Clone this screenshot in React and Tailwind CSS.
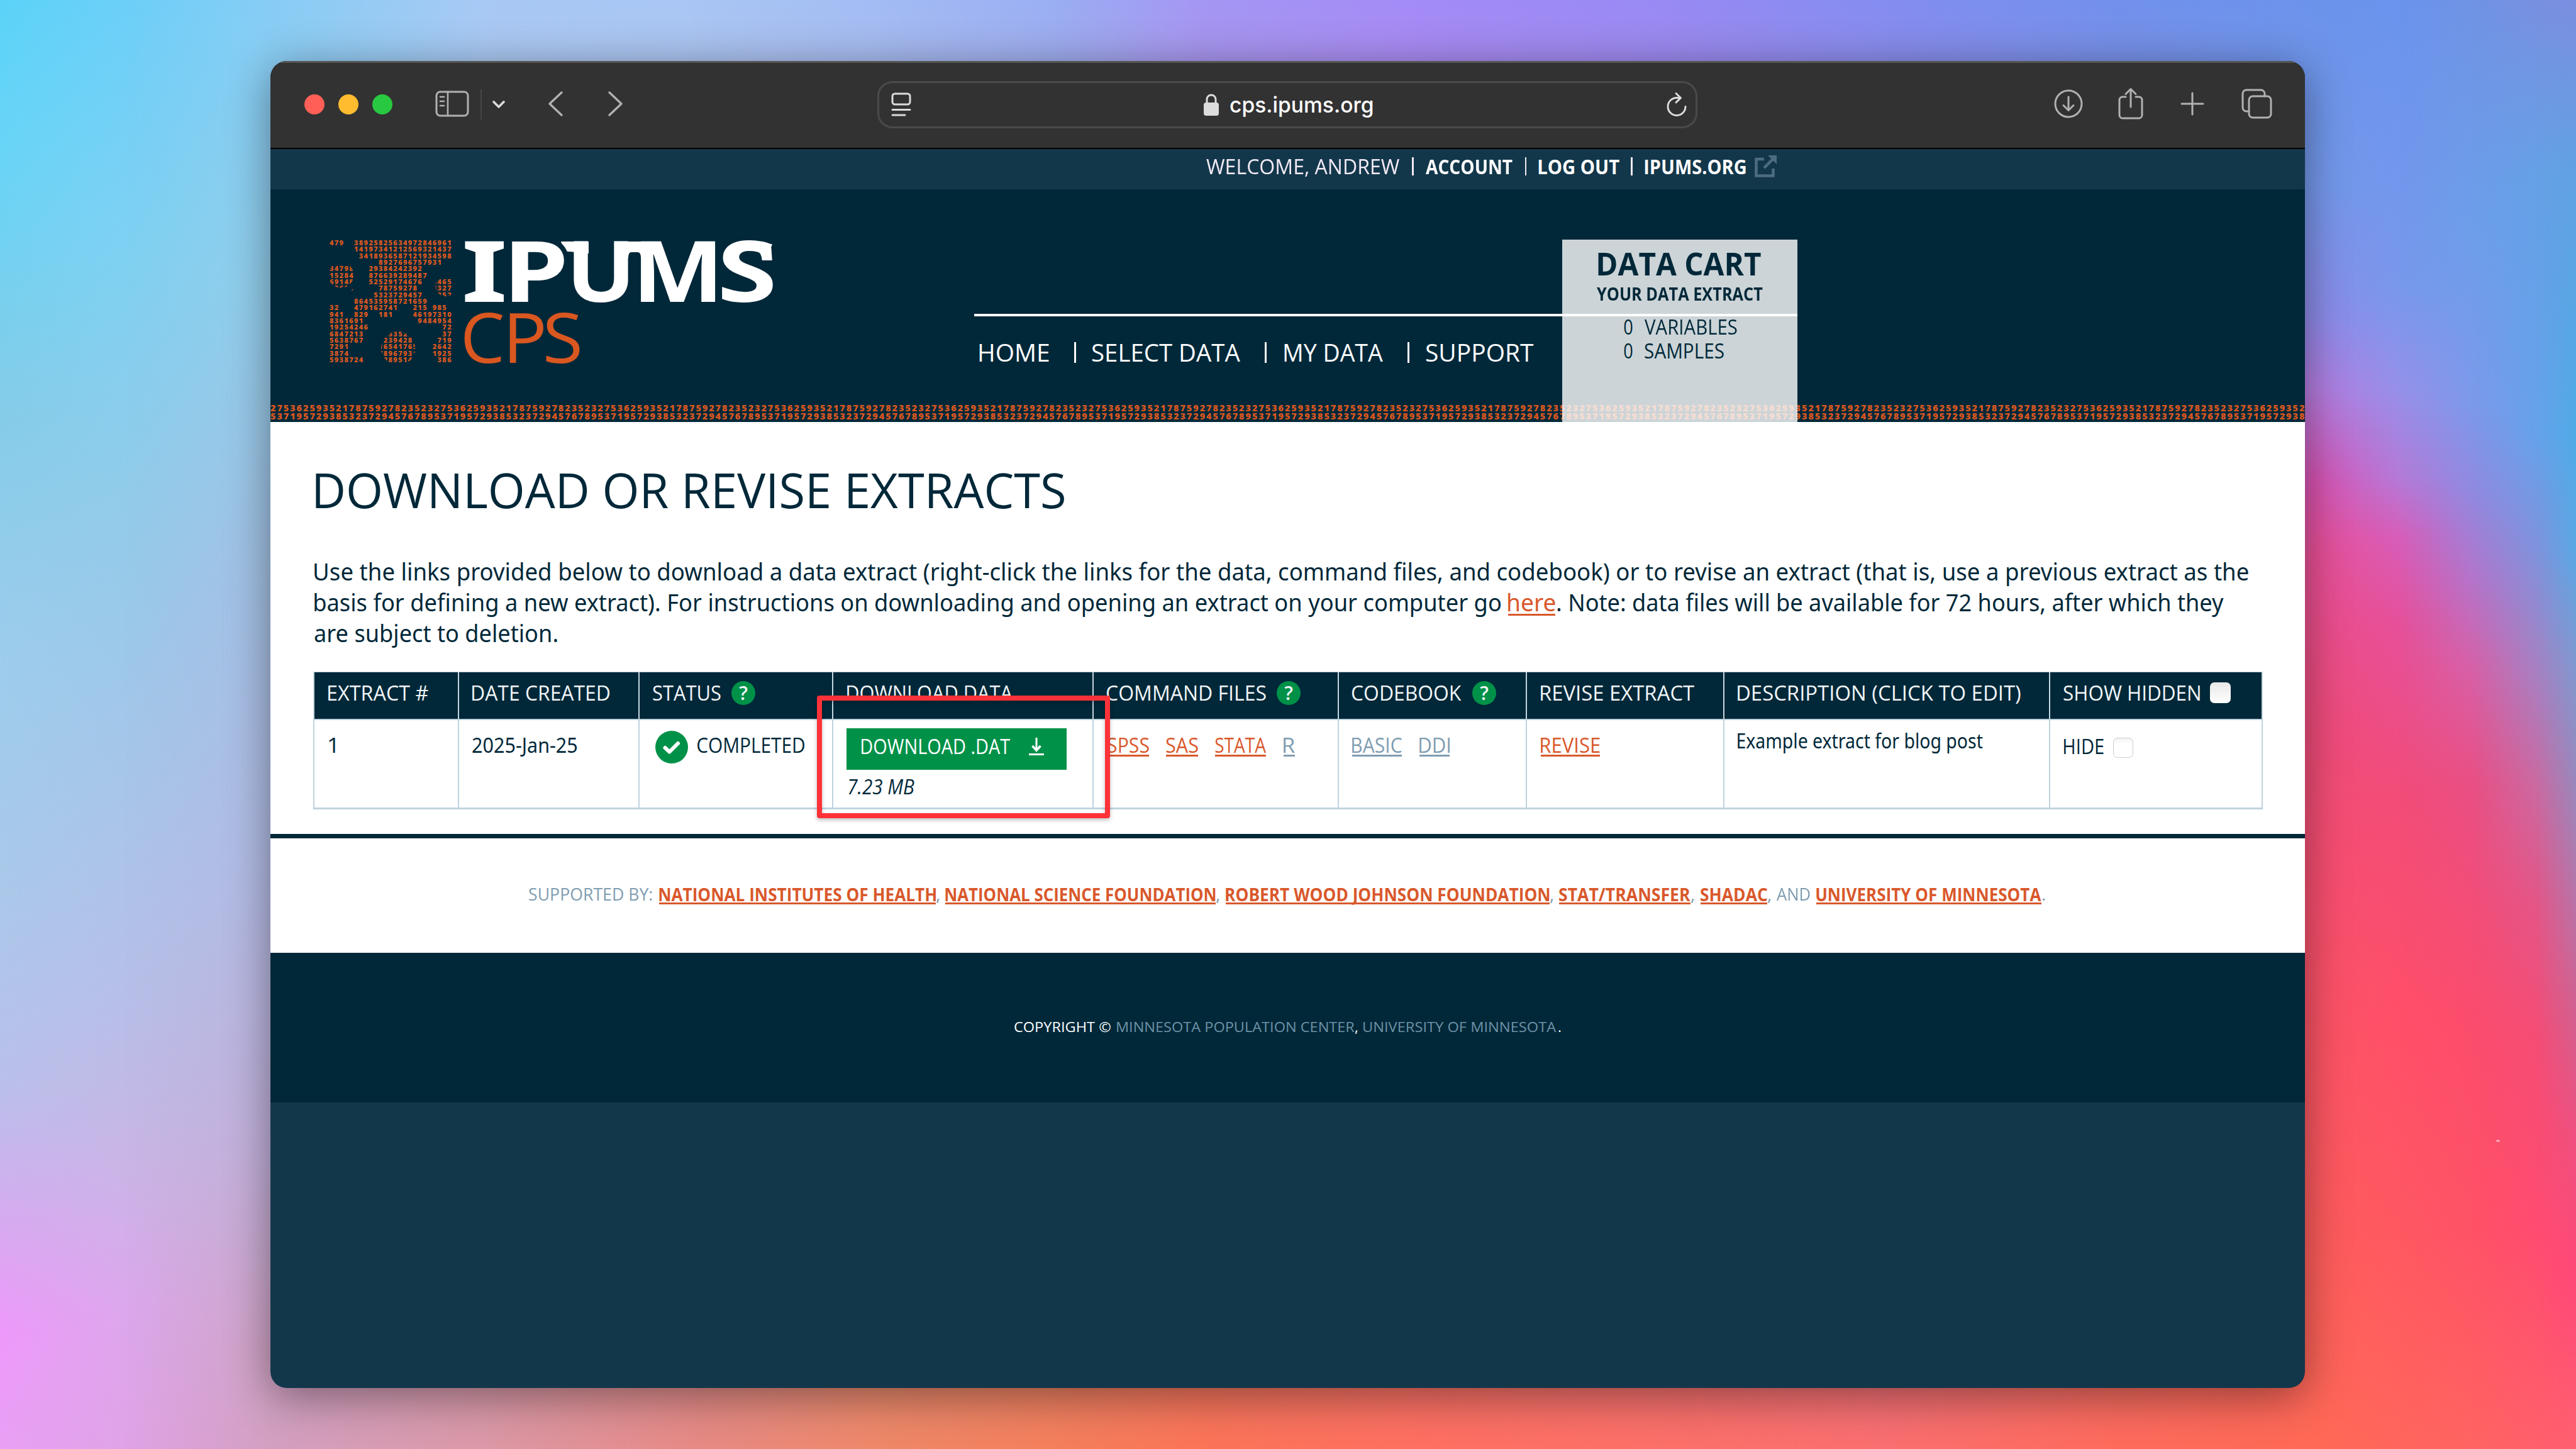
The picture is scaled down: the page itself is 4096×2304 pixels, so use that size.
import { useLayoutEffect, useRef } from "react";

/* Single line of text whose ink is stretched or condensed to the width of its box. */
function Fit({ children, className = "" }) {
  const box = useRef(null);
  const ink = useRef(null);
  useLayoutEffect(() => {
    const cs = getComputedStyle(box.current);
    const ctx = document.createElement("canvas").getContext("2d");
    ctx.font = `${cs.fontStyle} ${cs.fontWeight} ${cs.fontSize} ${cs.fontFamily}`;
    const m = ctx.measureText(children);
    const width = m.actualBoundingBoxLeft + m.actualBoundingBoxRight;
    const scale = box.current.clientWidth / width;
    ink.current.style.transform = `translateX(${m.actualBoundingBoxLeft * scale}px) scaleX(${scale})`;
  }, [children]);
  return (
    <span ref={box} className={`block shrink-0 whitespace-nowrap ${className}`}>
      <span ref={ink} className="inline-block origin-left whitespace-pre">{children}</span>
    </span>
  );
}

/* Wallpaper: vertical gradients cross-faded from one column to the next. */
const columns = [
  { x: 0, s: [[0, "#5cd3f9"], [0.1, "#68d5f7"], [0.28, "#84cde9"], [0.45, "#9dcdec"], [0.6, "#a9c9ea"], [0.75, "#bac0ea"], [0.85, "#d9a9f1"], [0.92, "#ee99fb"], [1, "#e9a0f5"]] },
  { x: 200, s: [[0, "#6ccff8"], [0.15, "#7cd1f3"], [0.35, "#92cbe9"], [0.55, "#a8c5e8"], [0.7, "#b8bee8"], [0.8, "#c9b5e6"], [0.9, "#dca7ec"], [1, "#dfa3e6"]] },
  { x: 420, s: [[0, "#86cdf5"], [0.2, "#92cdea"], [0.4, "#a3c0e4"], [0.6, "#b2bae4"], [0.8, "#c2afd8"], [0.93, "#cfa3c6"], [1, "#d3a0c2"]] },
  { x: 780, s: [[0, "#a8c9f4"], [1, "#dc98a6"]] },
  { x: 1100, s: [[0, "#a9c6f4"], [1, "#e78a86"]] },
  { x: 1400, s: [[0, "#a3bcf4"], [1, "#ef8868"]] },
  { x: 1680, s: [[0, "#9aaef3"], [1, "#f47f5c"]] },
  { x: 1900, s: [[0, "#a497f3"], [1, "#fb7558"]] },
  { x: 2250, s: [[0, "#a48bf7"], [1, "#ff7060"]] },
  { x: 2650, s: [[0, "#988af3"], [1, "#fc7069"]] },
  { x: 3000, s: [[0, "#848df0"], [1, "#fa6f70"]] },
  { x: 3350, s: [[0, "#7291ec"], [1, "#ff6b5c"]] },
  { x: 3680, s: [[0, "#6c93ea"], [0.13, "#7498ea"], [0.22, "#8f8ae9"], [0.27, "#b57bde"], [0.33, "#d854b4"], [0.38, "#e84f96"], [0.5, "#ef4c7a"], [0.62, "#f84f6e"], [0.72, "#fc5464"], [0.85, "#fe5c5c"], [1, "#ff6a56"]] },
  { x: 3816, s: [[0, "#6a94ed"], [0.2, "#7898ec"], [0.27, "#9690e9"], [0.33, "#b47ad8"], [0.37, "#d65eba"], [0.43, "#e6509a"], [0.55, "#f24c78"], [0.7, "#ff4f69"], [0.85, "#ff5862"], [1, "#ff665c"]] },
  { x: 3932, s: [[0, "#7093e4"], [0.15, "#6c9eea"], [0.28, "#7c99ea"], [0.34, "#9189e0"], [0.4, "#b474ca"], [0.46, "#d661a8"], [0.54, "#e94f84"], [0.7, "#fb4c6d"], [0.85, "#ff5266"], [1, "#ff6462"]] },
  { x: 4033, s: [[0, "#7890e0"], [0.12, "#66a0e6"], [0.3, "#66a2ea"], [0.38, "#8092dc"], [0.46, "#a681c3"], [0.54, "#ca6aa2"], [0.62, "#e35688"], [0.72, "#f64c74"], [0.85, "#ff4c70"], [1, "#ff606a"]] },
  { x: 4096, s: [[0, "#7c8ee0"], [0.12, "#60a2e2"], [0.3, "#50aae6"], [0.38, "#5aa8e4"], [0.46, "#8098d0"], [0.54, "#9888bc"], [0.62, "#b874a8"], [0.7, "#d2608f"], [0.78, "#ee5080"], [0.88, "#ff4878"], [1, "#ff6070"]] },
];

function Wallpaper() {
  return (
    <svg className="absolute inset-0 h-full w-full" viewBox="0 0 4096 2304" aria-hidden="true">
      <defs>
        {columns.map((c, i) => (
          <linearGradient key={c.x} id={`v${i}`} gradientUnits="userSpaceOnUse" x1="0" y1="0" x2="0" y2="2304">
            {c.s.map(([o, k]) => <stop key={o} offset={o} stopColor={k} />)}
          </linearGradient>
        ))}
        {columns.slice(1).map((c, i) => (
          <linearGradient key={c.x} id={`h${i + 1}`} gradientUnits="userSpaceOnUse" x1={columns[i].x} y1="0" x2={c.x} y2="0">
            <stop offset="0" stopColor="#000" />
            <stop offset="1" stopColor="#fff" />
          </linearGradient>
        ))}
        {columns.slice(1).map((c, i) => (
          <mask key={c.x} id={`m${i + 1}`} maskUnits="userSpaceOnUse" x="0" y="0" width="4096" height="2304" className="[color-interpolation:sRGB]">
            <rect x={columns[i].x} width={4096 - columns[i].x} height="2304" fill={`url(#h${i + 1})`} className="[color-interpolation:sRGB]" />
          </mask>
        ))}
      </defs>
      {columns.map((c, i) => (
        <rect key={c.x} width="4096" height="2304" fill={`url(#v${i})`} mask={i ? `url(#m${i})` : undefined} />
      ))}
      <ellipse cx="3972" cy="1814" rx="3" ry="1.500" fill="#ffb4c4" />
    </svg>
  );
}

const stroke = { fill: "none", strokeLinecap: "round", strokeLinejoin: "round" };

function Toolbar() {
  return (
    <div className="flex h-[140px] shrink-0 items-center border-t-[3px] border-b-2 border-t-[#565656] border-b-black bg-[#323232] pb-[3px] text-[#b1b1b1]">
      <div className="ml-[54px] flex gap-[22px]">
        <i className="size-8 rounded-full bg-[#ff5f57]" />
        <i className="size-8 rounded-full bg-[#febc2e]" />
        <i className="size-8 rounded-full bg-[#28c840]" />
      </div>
      <svg className="mb-[2px] ml-[68px] h-[42px] w-[54px]" viewBox="0 0 54 42" stroke="currentColor" strokeWidth="3" {...stroke}>
        <rect x="2" y="2" width="50" height="38" rx="6" />
        <path d="M20 2v38M8 10h6M8 17h6M8 24h6" strokeWidth="2.6" />
      </svg>
      <i className="ml-[18px] h-12 w-[2px] bg-[#464646]" />
      <svg className="ml-[16px] h-[16px] w-[22px]" viewBox="0 0 22 16" stroke="#dcdcdc" strokeWidth="3.6" {...stroke}>
        <path d="M3 4l8 8 8-8" />
      </svg>
      <svg className="mb-[2px] ml-[66px] h-[42px] w-[26px]" viewBox="0 0 26 42" stroke="currentColor" strokeWidth="3.4" {...stroke}>
        <path d="M23 3L4 21l19 18" />
      </svg>
      <svg className="mb-[2px] ml-[70px] h-[42px] w-[26px]" viewBox="0 0 26 42" stroke="currentColor" strokeWidth="3.4" {...stroke}>
        <path d="M3 3l19 18L3 39" />
      </svg>
      <div className="ml-[403px] flex h-[75px] w-[1304px] items-center rounded-[24px] border-[3px] border-[#4a4a4a]">
        <svg className="ml-[19px] h-[38px] w-[32px]" viewBox="0 0 32 38" stroke="#dcdcdc" strokeWidth="3" {...stroke}>
          <rect x="2" y="2" width="28" height="17" rx="4" />
          <path d="M2 27.500h28M2 36h20" />
        </svg>
        <svg className="ml-[465px] h-[35px] w-[24px]" viewBox="0 0 24 35">
          <rect x="0" y="14" width="24" height="21" rx="4" fill="#dcdcdc" />
          <path d="M5 15V9a7 7 0 0 1 14 0v6" fill="none" stroke="#dcdcdc" strokeWidth="3" />
        </svg>
        <Fit className="ml-[18px] w-[227px] font-[Inter,sans-serif] text-[35px] leading-[70px] font-medium text-white">cps.ipums.org</Fit>
        <svg className="ml-[466px] h-[40px] w-[34px]" viewBox="0 0 34 40" stroke="#dcdcdc" strokeWidth="2.900" {...stroke}>
          <path d="M18 9.500A14 14 0 1 0 31 23.500" />
          <path d="M16 2.500l7.500 7.200-7.500 7.200" />
          <path d="M18 9.700h5" />
        </svg>
      </div>
      <svg className="mb-[2px] ml-[567px] size-[46px]" viewBox="0 0 46 46" stroke="currentColor" strokeWidth="3" {...stroke}>
        <circle cx="23" cy="23" r="21" />
        <path d="M23 12v21M15 25.500l8 8 8-8" />
      </svg>
      <svg className="mb-[3px] ml-[56px] h-[51px] w-[40px]" viewBox="0 0 40 51" stroke="currentColor" strokeWidth="3" {...stroke}>
        <path d="M12 15H7a5 5 0 0 0-5 5v24a5 5 0 0 0 5 5h26a5 5 0 0 0 5-5V20a5 5 0 0 0-5-5h-5" />
        <path d="M20 31V3M12 10.500L20 2.500l8 8" />
      </svg>
      <svg className="mb-[2px] ml-[59px] size-[38px]" viewBox="0 0 38 38" stroke="currentColor" strokeWidth="3" {...stroke}>
        <path d="M19 2v34M2 19h34" />
      </svg>
      <svg className="mb-[2px] ml-[59px] h-[48px] w-[49px]" viewBox="0 0 49 48" stroke="currentColor" strokeWidth="3" {...stroke}>
        <rect x="12" y="12" width="35" height="34" rx="6" />
        <path d="M12 36H8a6 6 0 0 1-6-6V8a6 6 0 0 1 6-6h23a6 6 0 0 1 6 6v4" />
      </svg>
    </div>
  );
}

function AccountBar() {
  return (
    <div className="flex h-[64px] shrink-0 items-center bg-[#13374a] pb-[9px] text-[33px] leading-10 text-[#f2eaf6]">
      <Fit className="ml-[1488px] w-[307px]">WELCOME, ANDREW</Fit>
      <i className="ml-5 h-[29px] w-[2.500px] bg-current" />
      <Fit className="ml-[19px] w-[138px] font-bold text-white">ACCOUNT</Fit>
      <i className="ml-5 h-[29px] w-[2.500px] bg-current" />
      <Fit className="ml-[19px] w-[129px] font-bold text-white">LOG OUT</Fit>
      <i className="ml-[18px] h-[29px] w-[2.500px] bg-current" />
      <Fit className="ml-[19px] w-[161px] font-bold text-white">IPUMS.ORG</Fit>
      <svg className="ml-[14px] h-[35px] w-[35px]" viewBox="0 0 35 35" fill="none" stroke="#4d6c80" strokeWidth="4.500">
        <path d="M15 6H2.500v26.500h27V21" />
        <path d="M15 20L31 4" />
        <path d="M21 0h14v14z" fill="#4d6c80" stroke="none" />
      </svg>
    </div>
  );
}

const digits = [
  "479  38925825634972846961",
  "     14197341212569321437",
  "      3418936587121934598",
  "          8927696757931  ",
  "34798   29384242392      ",
  "15284   876639289487     ",
  "69148   52529174676  4465",
  "13628     78759278   8327",
  "         5323729457   352",
  "     864535958721659     ",
  "32   479162741   215 985 ",
  "941  829  181    46197310",
  "8361691           9484954",
  "19254246               72",
  "6847213    33352       37",
  "5638767    239428     719",
  "7291      16541765   2642",
  "3874      78967931   1925",
  "5938724    289514     386",
];

function Logo() {
  return (
    <div className="mt-[81px] ml-[94px] flex h-[196px]">
      <div className="relative w-[195px] text-[11px] leading-[10.340px] font-extrabold text-[#da5720]">
        {digits.map((row, i) => (
          <div key={i} className="-mt-px mb-px grid h-[10.340px] grid-cols-[repeat(25,7.800px)]">
            {row.split("").map((d, j) => <span key={j}>{d}</span>)}
          </div>
        ))}
        <svg className="absolute inset-0 h-[194px] w-[195px] overflow-visible" viewBox="83 65 722 718" fill="none" stroke="#002839" aria-hidden="true">
          <circle cx="150" cy="270" r="92" strokeWidth="34" />
          <circle cx="487" cy="702" r="118" strokeWidth="36" />
          <circle cx="766" cy="336" r="76" strokeWidth="34" />
        </svg>
      </div>
      <div className="ml-[20px]">
        <div className="relative -mt-[2.500px] flex text-[135px] leading-[96px] font-bold text-white">
          <Fit className="w-[63px] font-['Noto_Sans',sans-serif]">I</Fit>
          <Fit className="ml-[12px] w-[83px]">P</Fit>
          <Fit className="ml-[15px] w-[87px]">U</Fit>
          <Fit className="ml-[20px] w-[119px]">M</Fit>
          <Fit className="ml-[10px] w-[82px]">S</Fit>
          <svg className="absolute top-[4px] left-0 h-[30px] w-[491px]" viewBox="0 0 491 30" fill="#fff" aria-hidden="true">
            <path d="M146 -1h8q0 4 8 12q2 5 2 10h-4q-6-12-14-18z" fill="#002839" />
            <path d="M154 0h43v19h-20q0-3-14-3q-3-7-9-13q-2-3 0-3z" />
            <path d="M240 0h60l-4 26h-16q0-9-5-9h-10q-5 0-5 9h-20z" />
            <path d="M466 -1q13 1 21 6l2 28h-16q-1-16-7-16z" />
          </svg>
        </div>
        <div className="mt-[20px] flex text-[109px] leading-[78px] text-[#da5720]">
          <Fit className="-ml-px w-[62px]">C</Fit>
          <Fit className="ml-[10px] w-[54px]">P</Fit>
          <Fit className="ml-[4px] w-[54px]">S</Fit>
        </div>
      </div>
    </div>
  );
}

function SiteHeader() {
  return (
    <header className="relative flex h-[370px] shrink-0 bg-[#002839]">
      <div className="absolute inset-x-0 bottom-0 h-[29px] text-[14.500px] leading-[13px] font-extrabold tracking-[1.910px] whitespace-nowrap text-[#d9561f]">
        <div className="h-[13px]">{"2753625935217875927823523".repeat(13).slice(0, 316)}</div>
        <div className="h-[13px]">{"5371957293853237294576789".repeat(13).slice(0, 316)}</div>
      </div>
      <Logo />
      <nav className="mt-[198px] ml-[319px] h-[118px] w-[935px] border-t-[4px] border-white text-[39px] text-white">
        <div className="flex h-[114px] items-center leading-[50px]">
          <Fit className="ml-[8px] w-[111px]">HOME</Fit>
          <i className="ml-[40px] h-[33px] w-[3px] bg-white" />
          <Fit className="ml-[26px] w-[235px]">SELECT DATA</Fit>
          <i className="ml-[39px] h-[33px] w-[3px] bg-white" />
          <Fit className="ml-[28px] w-[157px]">MY DATA</Fit>
          <i className="ml-[39px] h-[33px] w-[3px] bg-white" />
          <Fit className="ml-[27px] w-[171px]">SUPPORT</Fit>
        </div>
      </nav>
      <div className="relative mt-[80px] flex w-[374px] flex-col bg-white/80 text-[#002839]">
        <div className="flex h-[74px] items-center pl-[57px] text-[51px] leading-none font-bold"><Fit className="w-[259px]">DATA CART</Fit></div>
        <div className="flex h-[23px] items-center pl-[55px] text-[29px] leading-none font-bold"><Fit className="w-[264px]">YOUR DATA EXTRACT</Fit></div>
        <div className="mt-[21px] h-[4px] bg-white" />
        <div className="flex h-[33px] items-center pl-[98px] text-[33px] leading-none"><Fit className="w-[14px]">0</Fit><Fit className="ml-[19px] w-[147px]">VARIABLES</Fit></div>
        <div className="flex h-[42px] items-center pl-[98px] text-[33px] leading-none"><Fit className="w-[14px]">0</Fit><Fit className="ml-[19px] w-[126px]">SAMPLES</Fit></div>
      </div>
    </header>
  );
}

function Help({ className }) {
  return (
    <span className={`flex size-[38px] shrink-0 items-center justify-center rounded-full bg-[#009148] text-[30px] leading-none font-semibold ${className}`}>?</span>
  );
}

function Th({ children, className = "" }) {
  return <div className={`flex h-[74px] items-center border-l-2 border-[#c4d6e0] pb-[9px] pl-[21px] ${className}`}>{children}</div>;
}

function Td({ children, className = "" }) {
  return <div className={`h-[139px] border-l-2 border-[#bfd3df] pl-[21px] ${className}`}>{children}</div>;
}

const link = "text-[#d9582b] after:block after:h-[3px] after:w-full after:bg-[#d9582b] after:-mt-[5px]";
const visited = "text-[#7f9db1] after:block after:h-[3px] after:w-full after:bg-[#7f9db1] after:-mt-[5px]";
const cols = "grid grid-cols-[230px_287px_308px_414px_390px_299px_314px_518px_340px]";

function ExtractTable() {
  return (
    <div className="relative mt-[37px] -ml-px w-[3100px] text-[33px] leading-10">
      <div className={`${cols} border-t border-b-[2.500px] border-[#bfd3df] bg-[#002839] font-medium text-[#f2f5f7]`}>
        <Th><Fit className="ml-px w-[159px]">EXTRACT #</Fit></Th>
        <Th><Fit className="w-[218px]">DATE CREATED</Fit></Th>
        <Th><Fit className="w-[108px]">STATUS</Fit><Help className="ml-[17px]" /></Th>
        <Th><Fit className="ml-px w-[263px]">DOWNLOAD DATA</Fit></Th>
        <Th><Fit className="w-[253px]">COMMAND FILES</Fit><Help className="ml-[17px]" /></Th>
        <Th><Fit className="w-[174px]">CODEBOOK</Fit><Help className="ml-[17px]" /></Th>
        <Th><Fit className="ml-px w-[244px]">REVISE EXTRACT</Fit></Th>
        <Th><Fit className="w-[450px]">DESCRIPTION (CLICK TO EDIT)</Fit></Th>
        <Th className="border-r-2 pb-[4px]">
          <Fit className="w-[217px]">SHOW HIDDEN</Fit>
          <span className="ml-[16px] size-[33px] rounded-[7px] bg-gradient-to-b from-[#e8e8e8] to-white" />
        </Th>
      </div>
      <div className={`${cols} border-b-[3px] border-[#bfd3df] text-[#002839]`}>
        <Td className="pt-[20px]"><Fit className="ml-px w-[11px]">1</Fit></Td>
        <Td className="pt-[20px] font-['Noto_Sans',sans-serif]"><Fit className="w-[166px]">2025-Jan-25</Fit></Td>
        <Td className="flex items-start">
          <svg className="mt-[17px] ml-[4px] size-[52px]" viewBox="0 0 52 52" fill="none" stroke="#fff" strokeWidth="6" strokeLinecap="round" strokeLinejoin="round">
            <circle cx="26" cy="26" r="26" fill="#009148" stroke="none" />
            <path d="M15.500 27l7 6.500L36 20" />
          </svg>
          <Fit className="mt-[20px] ml-[15px] w-[170px]">COMPLETED</Fit>
        </Td>
        <Td className="pt-[13px]">
          <div className="flex h-[66px] w-[350px] items-center bg-[#009148] pb-[9px] text-white">
            <Fit className="ml-[24px] w-[236px]">DOWNLOAD .DAT</Fit>
            <svg className="ml-[30px] h-[28px] w-[24px]" viewBox="0 0 24 28" stroke="#fff" strokeWidth="3" fill="none">
              <path d="M12 0v19" />
              <path d="M5.500 13L12 20l6.500-7" strokeWidth="3.600" />
              <path d="M0 26.500h24" />
            </svg>
          </div>
          <Fit className="mt-[7px] ml-[3px] w-[105px] italic">7.23 MB</Fit>
        </Td>
        <Td className="flex items-start pt-[20px]">
          <Fit className={`ml-px w-[66px] ${link}`}>SPSS</Fit>
          <Fit className={`ml-[27px] w-[51px] ${link}`}>SAS</Fit>
          <Fit className={`ml-[27px] w-[81px] ${link}`}>STATA</Fit>
          <Fit className={`ml-[28px] w-[18px] ${visited}`}>R</Fit>
        </Td>
        <Td className="flex items-start pt-[20px]">
          <Fit className={`w-[79px] ${visited}`}>BASIC</Fit>
          <Fit className={`ml-[28px] w-[48px] ${visited}`}>DDI</Fit>
        </Td>
        <Td className="pt-[20px]"><Fit className={`ml-px w-[94px] ${link}`}>REVISE</Fit></Td>
        <Td className="pt-[13px] font-['Noto_Sans',sans-serif]"><Fit className="w-[390px]">Example extract for blog post</Fit></Td>
        <Td className="flex items-start border-r-2">
          <Fit className="mt-[22px] ml-px w-[63px]">HIDE</Fit>
          <span className="mt-[28px] ml-[15px] size-[32px] rounded-[7px] border-[1.500px] border-[#cdcdcd] bg-gradient-to-b from-[#f3f3f3] via-white via-30% to-white" />
        </Td>
      </div>
      <div className="absolute top-[38px] left-[801px] h-[195px] w-[466px] rounded-[4px] border-[8.500px] border-[#fd3239] drop-shadow-[0_3px_3px_rgba(0,0,0,0.25)]" />
    </div>
  );
}

function Main() {
  return (
    <main className="h-[655px] shrink-0 bg-white pl-[69px] text-[#002839]">
      <h1 className="h-[144px] pt-[70px] text-[76px] leading-[76px]"><Fit className="ml-[3px] w-[1191px]">DOWNLOAD OR REVISE EXTRACTS</Fit></h1>
      <div className="mt-[69px] ml-px font-['Noto_Sans',sans-serif] text-[38px] leading-[49px]">
        <Fit className="w-[3075px]">Use the links provided below to download a data extract (right-click the links for the data, command files, and codebook) or to revise an extract (that is, use a previous extract as the</Fit>
        <div className="flex">
          <Fit className="w-[1886px]">basis for defining a new extract). For instructions on downloading and opening an extract on your computer go</Fit>
          <Fit className="ml-[12px] w-[75px] text-[#d9582b] after:-mt-[6px] after:-mb-[3px] after:block after:h-[3px] after:bg-[#d9582b]">here</Fit>
          <Fit className="ml-[3px] w-[1060px]">. Note: data files will be available for 72 hours, after which they</Fit>
        </div>
        <Fit className="w-[386px]">are subject to deletion.</Fit>
      </div>
      <ExtractTable />
    </main>
  );
}

function Sponsors() {
  const a = "font-bold text-[#d9582b] after:-mt-[3px] after:-mb-[2px] after:block after:h-[3px] after:bg-[#d9582b]";
  return (
    <section className="flex h-[189px] shrink-0 items-center border-t-[7px] border-[#002839] bg-white pb-[6px] text-[28px] leading-8 text-[#7f9db1]">
      <Fit className="ml-[411px] w-[196px]">SUPPORTED BY:</Fit>
      <Fit className={`ml-[11px] w-[440px] ${a}`}>NATIONAL INSTITUTES OF HEALTH</Fit>
      <span className="w-[15px]">,</span>
      <Fit className={`w-[430px] ${a}`}>NATIONAL SCIENCE FOUNDATION</Fit>
      <span className="w-[16px]">,</span>
      <Fit className={`w-[515px] ${a}`}>ROBERT WOOD JOHNSON FOUNDATION</Fit>
      <span className="w-[15px]">,</span>
      <Fit className={`w-[209px] ${a}`}>STAT/TRANSFER</Fit>
      <span className="w-[16px]">,</span>
      <Fit className={`w-[106px] ${a}`}>SHADAC</Fit>
      <span className="w-[15px]">,</span>
      <Fit className="w-[53px]">AND</Fit>
      <Fit className={`ml-[10px] w-[358px] ${a}`}>UNIVERSITY OF MINNESOTA</Fit>
      <span>.</span>
    </section>
  );
}

function Footer() {
  return (
    <footer className="flex h-[238px] shrink-0 items-center bg-[#002839] pb-[2px] text-[22.500px] leading-8 text-[#6f91a7]">
      <Fit className="ml-[1183px] w-[153px] font-medium text-white">COPYRIGHT ©</Fit>
      <Fit className="ml-[10px] w-[378px]">MINNESOTA POPULATION CENTER</Fit>
      <span className="w-[14px] font-medium text-white">,</span>
      <Fit className="w-[307px]">UNIVERSITY OF MINNESOTA</Fit>
      <span className="ml-[2px] font-medium text-white">.</span>
    </footer>
  );
}

export default function App() {
  return (
    <div className="relative h-[2304px] w-[4096px] overflow-hidden pt-[97px] pl-[430px] font-['Open_Sans','Noto_Sans',sans-serif]">
      <Wallpaper />
      <div className="relative h-[2110px] w-[3235px] rounded-[26px] shadow-[0_14px_70px_rgba(0,0,0,0.42)]">
        <div className="flex h-full flex-col overflow-hidden rounded-[26px] bg-[#13374a]">
          <Toolbar />
          <AccountBar />
          <SiteHeader />
          <Main />
          <Sponsors />
          <Footer />
        </div>
      </div>
    </div>
  );
}
